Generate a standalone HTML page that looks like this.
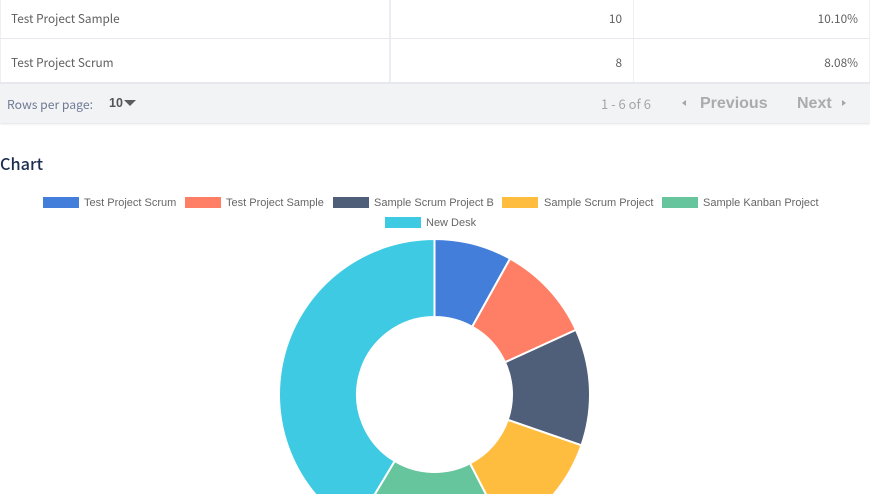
<!DOCTYPE html>
<html>
<head>
<meta charset="utf-8">
<style>
html,body{margin:0;padding:0;background:#fff;width:870px;height:494px;overflow:hidden}
body{position:relative;font-family:"Noto Sans CJK JP","Liberation Sans",sans-serif}
.t{position:absolute;white-space:nowrap;line-height:16px}
.l{position:absolute;background:#e8e9ef}
.c{font-size:11.8px;color:#5e5e5e}
.leg{font-family:"Liberation Sans",sans-serif;font-size:11px;color:#666;line-height:14px}
.sw{position:absolute;width:36px;height:11px;top:197px}
</style>
</head>
<body>
<div class="l" style="left:0;top:0;width:1px;height:84px;background:#f0f0f4"></div>
<div class="l" style="left:869px;top:0;width:1px;height:84px;background:#f0f0f4"></div>
<div class="l" style="left:389px;top:0;width:2px;height:83px;background:#ecedf2"></div>
<div class="l" style="left:633px;top:0;width:1px;height:83px;background:#eeeff3"></div>
<div class="l" style="left:0;top:38px;width:870px;height:1px"></div>
<div class="l" style="left:0;top:82px;width:870px;height:2px"></div>
<div style="position:absolute;left:0;top:84px;width:870px;height:39px;background:#f2f3f5;box-shadow:0 1px 2px rgba(0,0,0,.12)"></div>

<div class="t c" style="left:11px;top:11px">Test Project Sample</div>
<div class="t c" style="left:11px;top:55px">Test Project Scrum</div>
<div class="t c" style="right:248px;top:11px">10</div>
<div class="t c" style="right:248px;top:55px">8</div>
<div class="t c" style="right:12px;top:11px">10.10%</div>
<div class="t c" style="right:12px;top:55px">8.08%</div>

<div class="t" style="left:7px;top:96px;font-size:12.2px;color:#6f7a94">Rows per page:</div>
<div class="t" style="left:109px;top:95px;font-size:12.5px;font-weight:700;color:#555;font-family:'Liberation Sans',sans-serif">10</div>
<svg style="position:absolute;left:124px;top:100px" width="12" height="7"><path d="M0 0H12L6 6Z" fill="#5c5c5c"/></svg>

<div class="t" style="left:601px;top:96px;font-size:13px;color:#a3a5aa">1 - 6 of 6</div>
<svg style="position:absolute;left:682px;top:100px" width="5" height="7"><path d="M4 0V6L0 3Z" fill="#a3a5aa"/></svg>
<div class="t" style="left:700px;top:96px;font-size:16px;font-weight:700;color:#a9abaf;font-family:'Liberation Sans',sans-serif">Previous</div>
<div class="t" style="left:797px;top:96px;font-size:16px;font-weight:700;color:#a9abaf;font-family:'Liberation Sans',sans-serif">Next</div>
<svg style="position:absolute;left:842px;top:100px" width="5" height="7"><path d="M0 0V6L4 3Z" fill="#a3a5aa"/></svg>

<div class="t" style="left:0;top:153px;font-size:16.3px;line-height:20px;font-weight:500;color:#1c2e4f">Chart</div>

<div class="sw" style="left:42.5px;background:#437edb"></div>
<div class="t leg" style="left:84px;top:196px">Test Project Scrum</div>
<div class="sw" style="left:184.5px;background:#ff7f66"></div>
<div class="t leg" style="left:226px;top:196px">Test Project Sample</div>
<div class="sw" style="left:332.5px;background:#505f79"></div>
<div class="t leg" style="left:374px;top:196px">Sample Scrum Project B</div>
<div class="sw" style="left:502px;background:#ffbd40"></div>
<div class="t leg" style="left:544px;top:196px">Sample Scrum Project</div>
<div class="sw" style="left:661.5px;background:#66c59d"></div>
<div class="t leg" style="left:703px;top:196px">Sample Kanban Project</div>
<div class="sw" style="left:384.5px;top:217px;background:#3fcae3"></div>
<div class="t leg" style="left:426px;top:216px">New Desk</div>

<svg style="position:absolute;left:0;top:0" width="870" height="494" viewBox="0 0 870 494">
<g stroke="#fff" stroke-width="2" stroke-linejoin="round" transform="translate(0,-.5)">
<path fill="#437edb" d="M434.5 239.5A155.5 155.5 0 0 1 510.11 259.12L472.19 327.28A77.5 77.5 0 0 0 434.5 317.5Z"/>
<path fill="#ff7f66" d="M510.11 259.12A155.5 155.5 0 0 1 575.95 330.4L505 362.8A77.5 77.5 0 0 0 472.19 327.28Z"/>
<path fill="#505f79" d="M575.95 330.4A155.5 155.5 0 0 1 581.45 445.86L507.74 420.35A77.5 77.5 0 0 0 505 362.8Z"/>
<path fill="#ffbd40" d="M581.45 445.86A155.5 155.5 0 0 1 505.75 533.21L470.01 463.88A77.5 77.5 0 0 0 507.74 420.35Z"/>
<path fill="#66c59d" d="M505.75 533.21A155.5 155.5 0 0 1 354.65 528.43L394.7 461.5A77.5 77.5 0 0 0 470.01 463.88Z"/>
<path fill="#3fcae3" d="M354.65 528.43A155.5 155.5 0 0 1 434.5 239.5L434.5 317.5A77.5 77.5 0 0 0 394.7 461.5Z"/>
</g>
</svg>
</body>
</html>
